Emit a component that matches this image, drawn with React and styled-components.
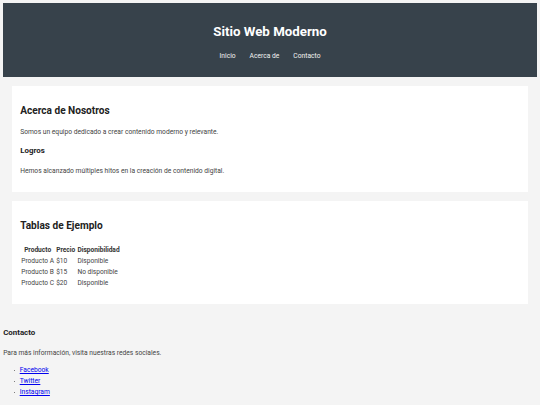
import React from "react";
import styled, { createGlobalStyle } from "styled-components";

const GlobalStyle = createGlobalStyle`
  body {
    margin: 3.2px;
    background: #f4f4f4;
    font-family: Roboto, "Liberation Sans", Arial, sans-serif;
    font-size: 6.7px;
    line-height: 1.62;
    color: #333;
  }
`;

const Header = styled.header`
  background: #37424b;
  color: #fff;
  text-align: center;
  padding: 9px 0;
`;

const Title = styled.h1`
  font-size: 13.3px;
  font-weight: 700;
  margin: 8.4px 0;
`;

const NavList = styled.ul`
  list-style: none;
  margin: 6.4px 0;
  padding: 0;
  display: flex;
  justify-content: center;
  gap: 14px;
`;

const NavLink = styled.a`
  color: #f2f2f2;
  text-decoration: none;
`;

const Main = styled.main`
  display: flex;
  flex-direction: column;
  gap: 9px;
  padding: 9px;
`;

const Card = styled.section`
  background: #fff;
  padding: 9px 8px 9.5px;
`;

const Heading = styled.h2`
  font-size: 10.1px;
  font-weight: 700;
  color: #222;
  margin: 8px 0;
`;

const SubHeading = styled.h3`
  font-size: 7.9px;
  font-weight: 700;
  color: #222;
  margin: 7.5px 0;
`;

const Text = styled.p`
  margin: 6.4px 0;
  color: #444;
`;

const Table = styled.table`
  border-spacing: 0.5px 0;
  margin: 10.5px 0 6px;
  font-size: 6.6px;
  line-height: 10.9px;
  color: #444;
`;

const Th = styled.th`
  padding: 0 1.1px;
  font-weight: 700;
  color: #333;
`;

const Td = styled.td`
  padding: 0 1.1px;
`;

const Footer = styled.footer`
  padding: 6.5px 0 0;
`;

const Links = styled.ul`
  list-style: none;
  margin: 6.4px 0;
  padding-left: 16.5px;
`;

const LinkItem = styled.li`
  position: relative;
  line-height: 11px;

  &::before {
    content: "";
    position: absolute;
    left: -6.2px;
    top: 4.9px;
    width: 1.6px;
    height: 1.6px;
    border-radius: 50%;
    background: #555;
  }
`;

const SocialLink = styled.a`
  color: #0000ee;
`;

const rows = [
  ["Producto A", "$10", "Disponible"],
  ["Producto B", "$15", "No disponible"],
  ["Producto C", "$20", "Disponible"],
];

export default function App() {
  return (
    <>
      <GlobalStyle />
      <Header>
        <Title>Sitio Web Moderno</Title>
        <nav>
          <NavList>
            <li><NavLink href="#">Inicio</NavLink></li>
            <li><NavLink href="#">Acerca de</NavLink></li>
            <li><NavLink href="#">Contacto</NavLink></li>
          </NavList>
        </nav>
      </Header>
      <Main>
        <Card>
          <Heading>Acerca de Nosotros</Heading>
          <Text>Somos un equipo dedicado a crear contenido moderno y relevante.</Text>
          <SubHeading>Logros</SubHeading>
          <Text>Hemos alcanzado múltiples hitos en la creación de contenido digital.</Text>
        </Card>
        <Card>
          <Heading>Tablas de Ejemplo</Heading>
          <Table>
            <thead>
              <tr>
                <Th>Producto</Th>
                <Th>Precio</Th>
                <Th>Disponibilidad</Th>
              </tr>
            </thead>
            <tbody>
              {rows.map((r) => (
                <tr key={r[0]}>
                  {r.map((c) => (
                    <Td key={c}>{c}</Td>
                  ))}
                </tr>
              ))}
            </tbody>
          </Table>
        </Card>
      </Main>
      <Footer>
        <SubHeading>Contacto</SubHeading>
        <Text>Para más información, visita nuestras redes sociales.</Text>
        <Links>
          <LinkItem><SocialLink href="#">Facebook</SocialLink></LinkItem>
          <LinkItem><SocialLink href="#">Twitter</SocialLink></LinkItem>
          <LinkItem><SocialLink href="#">Instagram</SocialLink></LinkItem>
        </Links>
      </Footer>
    </>
  );
}
